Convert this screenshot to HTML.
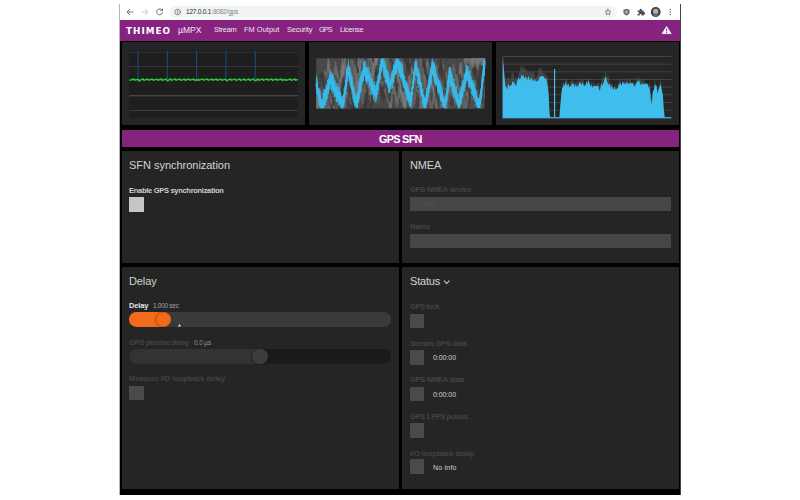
<!DOCTYPE html>
<html><head><meta charset="utf-8"><title>GPS SFN</title>
<style>
html,body{margin:0;padding:0;background:#fff;}
body{width:800px;height:500px;position:relative;overflow:hidden;font-family:"Liberation Sans",sans-serif;}
.a{position:absolute;}
.t{position:absolute;white-space:nowrap;line-height:1;transform:rotate(0.01deg);}
.p{position:absolute;background:#252525;}
.cb{position:absolute;width:14.6px;height:14.5px;background:#4a4a4a;}
svg{position:absolute;left:0;top:0;}
</style></head><body>

<div class="a" style="left:119.4px;top:4px;width:0.8px;height:491px;background:#b5b5b5"></div>
<div class="a" style="left:680px;top:4px;width:0.6px;height:491px;background:#444"></div>
<div class="a" style="left:120px;top:20.4px;width:560px;height:20.2px;background:#85237f"></div>
<div class="a" style="left:120px;top:40.5px;width:560px;height:454.1px;background:#000"></div>
<div class="a" style="left:168.6px;top:5.8px;width:448px;height:12.2px;border-radius:6.1px;background:#f1f3f4"></div>
<div class="p" style="left:122px;top:42.2px;width:183.3px;height:82.8px"></div>
<div class="p" style="left:308.8px;top:42.2px;width:183.3px;height:82.8px"></div>
<div class="p" style="left:495.5px;top:42.2px;width:183.9px;height:82.8px"></div>
<div class="a" style="left:122px;top:130px;width:557.2px;height:17px;background:#85237f"></div>
<div class="p" style="left:122px;top:150.8px;width:276.6px;height:112px"></div>
<div class="p" style="left:402.3px;top:150.8px;width:276.9px;height:112px"></div>
<div class="p" style="left:122px;top:266.6px;width:276.6px;height:222px"></div>
<div class="p" style="left:402.3px;top:266.6px;width:276.9px;height:222px"></div>
<div class="a" style="left:409.6px;top:197.4px;width:261.6px;height:14.1px;background:#464646"></div>
<div class="a" style="left:409.6px;top:233.7px;width:261.6px;height:14.1px;background:#464646"></div>
<div class="cb" style="left:129.4px;top:197px;background:#c6c6c6"></div>
<div class="cb" style="left:129.4px;top:385.6px"></div>
<div class="cb" style="left:409.7px;top:313.7px"></div>
<div class="cb" style="left:409.7px;top:350.2px"></div>
<div class="cb" style="left:409.7px;top:386.6px"></div>
<div class="cb" style="left:409.7px;top:423px"></div>
<div class="cb" style="left:409.7px;top:459.4px"></div>
<div class="a" style="left:129px;top:312.4px;width:262.4px;height:14.6px;border-radius:7.3px;background:#3a3a3a"></div>
<div class="a" style="left:129px;top:312.4px;width:40px;height:14.6px;border-radius:7.3px;background:#f26a1b"></div>
<div class="a" style="left:155.8px;top:311.9px;width:15.6px;height:15.6px;border-radius:50%;background:#f26a1b;box-shadow:0 0 0 0.7px #c95512 inset, -1px 0 2px rgba(0,0,0,.25)"></div>
<div class="a" style="left:129px;top:349px;width:262.4px;height:14.6px;border-radius:7.3px;background:#1a1a1a"></div>
<div class="a" style="left:129px;top:349px;width:138px;height:14.6px;border-radius:7.3px;background:#333"></div>
<div class="a" style="left:252.2px;top:348.5px;width:15.6px;height:15.6px;border-radius:50%;background:#3d3d3d;box-shadow:-1px 0 2px rgba(0,0,0,.3)"></div>
<svg width="800" height="500" viewBox="0 0 800 500">
<rect x="129.4" y="50.4" width="168.6" height="67.3" fill="#1e1e1e"/>
<rect x="129.4" y="51.7" width="168.6" height="1" fill="#343434"/>
<rect x="129.4" y="66.1" width="168.6" height="1" fill="#3a3a3a"/>
<rect x="129.4" y="95.3" width="168.6" height="1" fill="#585858"/>
<rect x="129.4" y="110.0" width="168.6" height="1" fill="#3c3c3c"/>
<rect x="137.5" y="50.4" width="1" height="29.1" fill="#1a4f80"/>
<rect x="166.8" y="50.4" width="1" height="29.1" fill="#1a4f80"/>
<rect x="196.1" y="50.4" width="1" height="29.1" fill="#1a4f80"/>
<rect x="225.4" y="50.4" width="1" height="29.1" fill="#1a4f80"/>
<rect x="254.7" y="50.4" width="1" height="29.1" fill="#1a4f80"/>
<polyline points="129.4,80.4 130.0,80.2 130.5,80.2 131.1,79.8 131.7,79.8 132.3,79.5 132.8,79.2 133.4,79.2 134.0,78.9 134.6,80.3 135.1,80.0 135.7,79.8 136.3,79.7 136.9,79.7 137.4,79.3 138.0,79.8 138.6,79.7 139.2,81.1 139.7,80.8 140.3,79.9 140.9,79.9 141.5,79.4 142.0,79.5 142.6,79.1 143.2,78.9 143.8,80.2 144.3,80.1 144.9,80.0 145.5,79.7 146.1,79.6 146.6,79.4 147.2,79.1 147.8,79.0 148.4,80.2 148.9,80.0 149.5,79.8 150.1,79.8 150.7,79.5 151.2,79.3 151.8,79.2 152.4,79.0 153.0,80.3 153.5,80.2 154.1,80.0 154.7,79.7 155.3,79.6 155.8,79.4 156.4,79.3 157.0,79.1 157.6,80.2 158.1,80.3 158.7,79.8 159.3,79.7 159.9,79.6 160.4,79.3 161.0,79.2 161.6,78.9 162.2,80.4 162.7,80.2 163.3,80.0 163.9,79.9 164.5,79.5 165.0,79.4 165.6,79.2 166.2,79.0 166.8,80.3 167.3,80.9 167.9,80.8 168.5,80.4 169.1,79.6 169.6,79.2 170.2,79.2 170.8,79.0 171.4,80.5 171.9,80.2 172.5,79.9 173.1,79.7 173.7,79.6 174.2,79.2 174.8,79.2 175.4,78.9 176.0,80.2 176.5,80.0 177.1,80.0 177.7,79.6 178.3,79.5 178.8,79.3 179.4,79.3 180.0,78.9 180.6,80.3 181.1,80.1 181.7,80.1 182.3,79.8 182.9,79.7 183.4,79.3 184.0,79.2 184.6,79.0 185.2,80.4 185.7,80.3 186.3,79.8 186.9,79.7 187.5,79.5 188.0,79.3 188.6,79.2 189.2,79.0 189.8,80.2 190.3,80.0 190.9,79.9 191.5,79.7 192.1,79.6 192.6,79.5 193.2,79.2 193.8,79.0 194.4,80.3 194.9,80.2 195.5,79.8 196.1,79.9 196.7,80.3 197.2,80.2 197.8,80.0 198.4,79.0 199.0,80.3 199.5,80.0 200.1,80.0 200.7,79.6 201.3,79.4 201.8,79.3 202.4,79.1 203.0,79.0 203.6,80.2 204.1,80.0 204.7,79.8 205.3,79.6 205.9,79.5 206.4,79.2 207.0,79.3 207.6,79.0 208.2,80.2 208.7,80.1 209.3,79.9 209.9,79.7 210.5,79.4 211.0,79.5 211.6,79.3 212.2,79.0 212.8,80.3 213.3,80.0 213.9,79.8 214.5,79.7 215.1,79.5 215.6,79.5 216.2,79.1 216.8,78.9 217.4,80.4 217.9,80.1 218.5,79.8 219.1,79.8 219.7,79.4 220.2,79.4 220.8,79.3 221.4,79.1 222.0,80.4 222.5,80.1 223.1,79.9 223.7,79.7 224.3,79.6 224.8,79.4 225.4,79.3 226.0,79.6 226.6,80.9 227.1,80.9 227.7,80.1 228.3,79.9 228.9,79.7 229.4,79.5 230.0,79.3 230.6,78.9 231.2,80.3 231.7,80.1 232.3,79.8 232.9,79.6 233.5,79.5 234.0,79.3 234.6,79.2 235.2,79.1 235.8,80.3 236.3,80.3 236.9,80.1 237.5,79.9 238.1,79.5 238.6,79.3 239.2,79.1 239.8,78.9 240.4,80.2 240.9,80.2 241.5,80.1 242.1,79.9 242.7,79.6 243.2,79.4 243.8,79.3 244.4,78.9 245.0,80.4 245.5,80.2 246.1,80.0 246.7,79.8 247.3,79.6 247.8,79.3 248.4,79.3 249.0,78.9 249.6,80.4 250.1,80.3 250.7,79.9 251.3,79.7 251.9,79.7 252.4,79.4 253.0,79.1 253.6,78.9 254.2,80.2 254.7,80.2 255.3,80.7 255.9,80.3 256.5,80.4 257.0,79.5 257.6,79.2 258.2,79.0 258.8,80.3 259.3,80.0 259.9,79.8 260.5,79.9 261.1,79.6 261.6,79.4 262.2,79.3 262.8,79.0 263.4,80.4 263.9,80.2 264.5,79.9 265.1,79.7 265.7,79.5 266.2,79.3 266.8,79.2 267.4,78.9 268.0,80.3 268.5,80.0 269.1,80.1 269.7,79.7 270.3,79.5 270.8,79.4 271.4,79.3 272.0,79.0 272.6,80.4 273.1,80.1 273.7,79.9 274.3,79.8 274.9,79.4 275.4,79.4 276.0,79.1 276.6,78.9 277.2,80.4 277.7,80.0 278.3,79.9 278.9,79.8 279.5,79.6 280.0,79.3 280.6,79.2 281.2,79.0 281.8,80.4 282.3,80.0 282.9,80.0 283.5,79.7 284.1,79.5 284.6,80.2 285.2,79.9 285.8,79.7 286.4,80.4 286.9,80.2 287.5,79.9 288.1,79.8 288.7,79.6 289.2,79.4 289.8,79.2 290.4,79.0 291.0,80.3 291.5,80.1 292.1,80.1 292.7,79.8 293.3,79.7 293.8,79.5 294.4,79.1 295.0,79.0 295.6,80.4 296.1,80.2 296.7,79.8 297.3,79.6 297.9,79.5" fill="none" stroke="#2bcb3e" stroke-width="1.4" stroke-linejoin="round"/>
<rect x="316.2" y="58.3" width="168.6" height="50.2" fill="#484848"/>
<path d="M316.50 103.9V108.5M317.10 96.7V108.5M317.70 98.8V108.5M318.30 96.8V108.5M318.90 89.1V103.4M319.50 87.3V102.7M320.10 88.6V104.9M320.70 84.2V97.2M321.30 84.1V96.1M321.90 83.6V93.2M322.50 77.2V88.4M323.10 75.7V88.7M323.70 76.7V85.2M324.30 71.5V81.5M324.90 70.0V88.4M325.50 71.9V85.5M326.10 78.7V86.8M326.70 76.9V90.3M327.30 80.9V96.2M327.90 79.1V92.6M328.50 84.8V98.3M329.10 82.8V97.7M329.70 87.2V94.2M330.30 86.4V95.9M330.90 85.1V102.1M331.50 88.3V100.4M332.10 90.1V102.5M332.70 92.3V107.5M333.30 96.1V108.5M333.90 99.2V108.0M334.50 98.6V108.5M335.10 102.6V108.5M335.70 104.2V108.5M336.30 103.7V108.5M336.90 104.2V108.5M337.50 99.8V108.5M338.10 95.8V103.7M338.70 90.6V101.9M339.30 84.4V95.0M339.90 74.3V87.6M340.50 70.3V85.1M341.10 67.7V83.0M341.70 63.6V75.9M342.30 58.3V71.2M342.90 60.4V77.1M343.50 65.1V78.4M344.10 70.5V79.3M344.70 75.4V82.8M345.30 77.8V86.7M345.90 82.3V94.7M346.50 80.0V96.8M347.10 87.4V97.1M347.70 90.6V101.9M348.30 92.4V103.4M348.90 91.3V108.5M349.50 96.7V108.2M350.10 96.3V108.5M350.70 98.8V107.3M351.30 94.5V107.4M351.90 93.5V104.4M352.50 91.9V99.8M353.10 88.4V97.8M353.70 85.8V92.3M354.30 81.4V93.1M354.90 76.0V91.0M355.50 71.8V87.4M356.10 67.0V81.9M356.70 67.6V82.7M357.30 61.4V77.0M357.90 62.8V75.0M358.50 58.3V70.9M359.10 58.3V73.6M359.70 62.4V73.1M360.30 59.3V76.8M360.90 61.4V77.2M361.50 62.9V80.0M362.10 66.4V78.8M362.70 73.1V80.2M363.30 74.3V86.9M363.90 72.6V86.9M364.50 73.5V88.7M365.10 75.9V85.4M365.70 75.2V92.0M366.30 78.7V93.0M366.90 83.7V95.3M367.50 84.2V92.5M368.10 85.9V98.9M368.70 88.1V100.7M369.30 88.1V100.2M369.90 90.3V104.5M370.50 86.0V101.7M371.10 83.6V94.6M371.70 83.8V92.6M372.30 79.0V91.1M372.90 76.9V83.5M373.50 71.0V83.6M374.10 64.0V79.5M374.70 62.7V74.3M375.30 58.3V67.4M375.90 58.3V63.8M376.50 58.3V66.9M377.10 58.3V65.8M377.70 58.3V71.6M378.30 59.3V68.6M378.90 58.3V71.2M379.50 62.2V73.2M380.10 65.1V81.4M380.70 70.4V83.0M381.30 67.7V84.8M381.90 74.9V88.8M382.50 75.7V85.3M383.10 81.7V91.2M383.70 79.6V90.9M384.30 77.9V88.5M384.90 71.7V83.6M385.50 69.6V86.7M386.10 71.3V84.6M386.70 64.4V81.7M387.30 64.4V75.8M387.90 58.3V75.0M388.50 60.3V71.8M389.10 58.8V67.0M389.70 58.3V70.4M390.30 58.3V64.2M390.90 58.3V63.7M391.50 58.3V61.2M392.10 58.3V66.9M392.70 58.3V67.3M393.30 58.3V69.3M393.90 58.3V68.7M394.50 60.2V74.4M395.10 62.9V78.7M395.70 69.1V77.5M396.30 72.8V83.0M396.90 73.4V83.9M397.50 72.9V90.9M398.10 78.4V90.8M398.70 80.3V92.3M399.30 83.1V91.4M399.90 84.3V98.1M400.50 83.8V94.8M401.10 82.5V101.8M401.70 87.2V97.3M402.30 91.4V100.5M402.90 93.4V101.7M403.50 94.1V105.9M404.10 91.6V108.5M404.70 95.7V107.5M405.30 91.1V102.1M405.90 88.7V97.1M406.50 77.9V91.5M407.10 76.6V90.5M407.70 69.5V83.1M408.30 68.9V79.4M408.90 62.3V78.1M409.50 58.3V72.3M410.10 58.8V65.2M410.70 58.3V74.2M411.30 61.0V71.1M411.90 65.9V81.1M412.50 66.3V84.1M413.10 68.8V83.3M413.70 78.3V86.1M414.30 77.7V95.0M414.90 80.7V96.3M415.50 83.7V98.2M416.10 88.5V98.6M416.70 90.1V103.2M417.30 94.6V107.2M417.90 101.9V108.5M418.50 102.1V108.5M419.10 107.2V108.5M419.70 101.3V108.5M420.30 99.9V108.5M420.90 97.3V105.5M421.50 90.0V105.9M422.10 84.6V101.3M422.70 81.7V92.6M423.30 74.4V92.0M423.90 75.3V83.6M424.50 70.3V84.5M425.10 67.2V78.0M425.70 61.8V79.0M426.30 62.7V71.3M426.90 58.4V72.1M427.50 62.2V75.1M428.10 60.6V75.3M428.70 66.5V80.8M429.30 64.5V77.9M429.90 71.1V83.9M430.50 72.9V87.6M431.10 73.8V84.6M431.70 78.1V88.6M432.30 75.5V89.2M432.90 82.1V92.3M433.50 80.7V94.5M434.10 89.8V96.6M434.70 90.1V105.1M435.30 90.3V108.4M435.90 91.4V106.2M436.50 99.1V108.5M437.10 97.7V108.5M437.70 100.8V108.5M438.30 105.2V108.5M438.90 108.5V108.5M439.50 102.1V108.5M440.10 97.9V108.5M440.70 91.5V101.5M441.30 82.0V96.8M441.90 82.8V92.4M442.50 75.9V90.9M443.10 72.5V82.4M443.70 64.2V76.7M444.30 67.4V84.4M444.90 74.9V81.4M445.50 76.8V89.7M446.10 77.5V90.5M446.70 75.1V89.8M447.30 76.9V93.9M447.90 84.2V97.0M448.50 86.2V96.4M449.10 90.8V102.1M449.70 86.8V103.7M450.30 96.0V103.8M450.90 96.2V108.5M451.50 96.2V108.5M452.10 104.5V108.5M452.70 106.2V108.5M453.30 100.8V108.5M453.90 96.7V108.5M454.50 94.1V106.7M455.10 92.1V102.9M455.70 84.9V96.9M456.30 81.5V94.5M456.90 83.2V89.9M457.50 76.7V88.8M458.10 70.6V89.6M458.70 67.4V82.2M459.30 70.5V80.7M459.90 63.0V77.0M460.50 63.0V73.6M461.10 62.1V77.2M461.70 63.0V80.1M462.30 69.5V82.3M462.90 70.9V83.0M463.50 73.0V86.8M464.10 76.8V85.9M464.70 79.1V87.9M465.30 79.1V91.5M465.90 82.6V98.3M466.50 84.0V95.1M467.10 84.0V100.3M467.70 84.9V98.6M468.30 87.9V105.5M468.90 88.7V101.3M469.50 94.4V103.3M470.10 96.6V108.5M470.70 95.2V108.5M471.30 94.8V108.5M471.90 100.9V108.5M472.50 97.8V108.5M473.10 102.1V108.5M473.70 103.9V108.5M474.30 97.7V106.9M474.90 88.6V103.4M475.50 85.1V92.6M476.10 77.9V90.9M476.70 72.5V82.0M477.30 62.1V77.5M477.90 61.3V68.4M478.50 58.3V65.6M479.10 58.3V59.4M479.70 58.3V63.8M480.30 58.3V61.2M480.90 58.3V61.5M481.50 58.3V62.0M482.10 58.3V65.8M482.70 58.3V62.6M483.30 58.3V61.5M483.90 58.3V66.1M484.50 58.3V65.3" stroke="#7a7a7a" stroke-opacity="0.85" stroke-width="0.9" fill="none"/>
<path d="M316.50 77.5V87.9M317.10 81.2V91.2M317.70 77.4V94.3M318.30 77.4V90.3M318.90 77.2V87.8M319.50 77.8V89.5M320.10 72.4V85.6M320.70 74.5V89.5M321.30 76.6V84.8M321.90 72.4V91.8M322.50 76.7V86.4M323.10 74.6V89.8M323.70 75.8V92.5M324.30 82.0V94.6M324.90 84.2V94.6M325.50 82.6V100.3M326.10 89.9V98.7M326.70 91.1V103.5M327.30 95.5V104.1M327.90 93.7V108.5M328.50 100.8V108.5M329.10 98.1V108.5M329.70 99.9V108.5M330.30 102.9V108.5M330.90 102.4V108.5M331.50 98.3V108.5M332.10 95.5V108.5M332.70 94.9V104.1M333.30 92.2V103.3M333.90 87.9V104.7M334.50 87.6V98.1M335.10 85.1V95.2M335.70 85.1V95.0M336.30 80.1V92.8M336.90 79.9V90.6M337.50 76.5V88.2M338.10 68.6V83.6M338.70 73.9V83.8M339.30 69.1V82.7M339.90 71.7V90.7M340.50 74.5V91.3M341.10 80.2V94.5M341.70 80.1V96.2M342.30 84.5V97.1M342.90 81.4V94.3M343.50 87.7V101.4M344.10 91.2V104.6M344.70 92.6V106.2M345.30 92.4V108.4M345.90 95.1V104.4M346.50 93.6V105.4M347.10 97.5V105.1M347.70 97.3V108.5M348.30 93.6V107.0M348.90 96.5V108.5M349.50 100.5V108.5M350.10 103.9V108.5M350.70 104.7V108.5M351.30 104.3V108.5M351.90 95.7V108.5M352.50 89.7V103.1M353.10 83.4V100.4M353.70 82.9V96.8M354.30 78.9V91.4M354.90 74.2V86.3M355.50 67.1V79.3M356.10 58.3V73.3M356.70 59.8V72.7M357.30 66.9V74.2M357.90 65.5V78.9M358.50 68.9V84.8M359.10 74.2V82.8M359.70 73.3V84.0M360.30 78.3V87.5M360.90 81.5V91.5M361.50 83.1V97.3M362.10 89.0V100.7M362.70 90.3V100.5M363.30 95.6V104.4M363.90 101.0V108.5M364.50 97.8V108.5M365.10 99.0V108.5M365.70 99.6V108.5M366.30 94.4V107.3M366.90 90.1V105.7M367.50 84.4V97.3M368.10 79.6V92.2M368.70 78.5V91.1M369.30 78.2V90.1M369.90 74.9V84.9M370.50 64.8V78.4M371.10 66.4V78.1M371.70 60.7V74.7M372.30 60.0V69.4M372.90 60.6V69.0M373.50 58.8V76.5M374.10 62.3V73.4M374.70 63.7V80.8M375.30 66.2V80.5M375.90 71.0V79.3M376.50 72.1V80.0M377.10 72.6V86.2M377.70 71.3V88.1M378.30 75.8V87.6M378.90 76.6V91.1M379.50 77.9V89.4M380.10 78.9V96.2M380.70 83.8V97.5M381.30 84.9V94.3M381.90 82.3V100.1M382.50 83.0V96.5M383.10 82.9V97.3M383.70 88.1V102.2M384.30 83.8V99.3M384.90 78.7V94.8M385.50 76.6V93.3M386.10 73.4V88.4M386.70 71.2V86.3M387.30 71.1V83.0M387.90 67.9V80.8M388.50 63.2V70.4M389.10 59.2V72.5M389.70 58.3V62.8M390.30 58.3V62.4M390.90 58.3V64.7M391.50 58.3V62.5M392.10 58.3V66.8M392.70 58.3V72.2M393.30 62.9V75.4M393.90 60.5V79.5M394.50 69.8V78.0M395.10 73.3V80.3M395.70 71.7V89.4M396.30 74.8V91.0M396.90 80.8V89.5M397.50 84.4V96.4M398.10 81.1V90.7M398.70 76.9V86.0M399.30 75.3V88.3M399.90 71.9V82.8M400.50 65.0V81.3M401.10 63.1V79.4M401.70 66.1V75.2M402.30 58.5V72.3M402.90 58.3V71.6M403.50 58.3V71.8M404.10 58.3V69.5M404.70 58.3V61.7M405.30 58.3V66.2M405.90 58.3V63.9M406.50 58.3V68.0M407.10 58.3V67.7M407.70 58.3V72.0M408.30 58.3V70.2M408.90 62.9V75.3M409.50 63.2V73.5M410.10 64.5V75.5M410.70 65.6V82.0M411.30 69.3V82.2M411.90 73.7V85.2M412.50 73.0V85.9M413.10 75.8V88.2M413.70 83.4V92.7M414.30 83.9V96.1M414.90 83.5V97.3M415.50 88.8V101.7M416.10 89.0V105.6M416.70 92.1V105.1M417.30 97.4V108.5M417.90 95.4V108.5M418.50 100.3V108.5M419.10 91.6V107.1M419.70 90.5V100.6M420.30 84.8V93.8M420.90 80.0V93.1M421.50 72.0V85.0M422.10 72.5V81.3M422.70 67.1V79.0M423.30 62.0V71.6M423.90 58.3V70.9M424.50 61.5V75.0M425.10 63.9V73.3M425.70 60.1V78.5M426.30 67.0V77.5M426.90 69.5V80.8M427.50 76.5V86.7M428.10 81.6V90.7M428.70 80.2V96.6M429.30 84.8V98.5M429.90 91.2V102.4M430.50 92.3V106.3M431.10 91.7V107.1M431.70 97.0V108.5M432.30 102.5V108.5M432.90 101.1V108.5M433.50 98.8V108.5M434.10 95.3V108.5M434.70 93.3V104.7M435.30 92.4V102.0M435.90 84.4V100.9M436.50 82.2V94.4M437.10 80.5V92.6M437.70 75.8V89.1M438.30 70.3V84.1M438.90 68.9V84.9M439.50 67.3V79.4M440.10 59.8V72.9M440.70 59.4V70.3M441.30 58.9V75.1M441.90 67.2V77.9M442.50 66.4V81.3M443.10 69.0V83.1M443.70 69.2V84.6M444.30 70.4V84.5M444.90 74.1V87.6M445.50 75.3V87.5M446.10 75.6V90.9M446.70 83.8V92.2M447.30 86.2V95.2M447.90 85.5V99.4M448.50 88.3V98.6M449.10 91.4V104.1M449.70 88.6V104.9M450.30 91.7V106.0M450.90 97.8V106.2M451.50 95.9V108.5M452.10 98.9V108.5M452.70 101.5V108.5M453.30 101.8V108.5M453.90 94.3V108.5M454.50 92.4V103.8M455.10 87.6V98.3M455.70 81.3V95.6M456.30 80.4V91.0M456.90 75.2V86.0M457.50 70.4V77.7M458.10 67.8V80.8M458.70 73.6V83.4M459.30 74.5V88.0M459.90 75.1V88.2M460.50 75.3V93.8M461.10 83.5V95.7M461.70 79.7V97.5M462.30 82.4V98.6M462.90 90.3V96.4M463.50 85.9V103.1M464.10 92.9V101.4M464.70 95.9V104.5M465.30 97.2V106.7M465.90 96.6V108.5M466.50 105.1V108.5M467.10 101.6V108.5M467.70 98.8V108.5M468.30 94.9V108.1M468.90 92.8V107.3M469.50 89.3V103.6M470.10 85.2V101.3M470.70 86.4V95.9M471.30 81.3V91.2M471.90 77.6V87.9M472.50 73.6V86.5M473.10 69.3V85.1M473.70 69.2V81.1M474.30 62.0V76.6M474.90 60.6V75.1M475.50 65.9V81.5M476.10 70.6V81.6M476.70 69.0V79.6M477.30 70.8V88.1M477.90 75.4V90.6M478.50 76.2V89.1M479.10 75.5V88.1M479.70 78.9V94.3M480.30 79.7V94.3M480.90 84.0V97.0M481.50 83.5V96.4M482.10 87.4V99.4M482.70 88.2V103.8M483.30 88.0V102.6M483.90 92.1V103.5M484.50 93.9V108.5" stroke="#363636" stroke-opacity="0.75" stroke-width="0.9" fill="none"/>
<path d="M316.50 77.0V87.5M317.10 74.9V87.1M317.70 73.7V89.6M318.30 74.3V91.5M318.90 76.2V86.4M319.50 78.6V86.8M320.10 80.1V93.9M320.70 77.9V92.7M321.30 77.4V94.0M321.90 81.9V96.6M322.50 83.8V98.9M323.10 86.4V98.7M323.70 89.0V102.8M324.30 94.9V102.9M324.90 96.9V108.5M325.50 92.2V108.5M326.10 97.6V108.5M326.70 96.2V108.5M327.30 100.8V108.5M327.90 101.6V108.5M328.50 100.3V108.5M329.10 105.4V108.5M329.70 106.4V108.5M330.30 98.7V108.5M330.90 95.1V104.3M331.50 91.1V103.9M332.10 82.7V102.2M332.70 81.5V93.7M333.30 75.1V87.1M333.90 72.5V79.7M334.50 67.6V78.4M335.10 60.8V74.4M335.70 62.0V74.7M336.30 65.3V76.4M336.90 66.9V79.8M337.50 70.5V78.2M338.10 69.7V86.1M338.70 72.3V89.4M339.30 77.1V92.5M339.90 81.4V97.2M340.50 86.0V100.6M341.10 85.9V97.0M341.70 94.0V104.7M342.30 97.2V105.9M342.90 96.7V108.5M343.50 97.7V108.5M344.10 101.0V108.5M344.70 95.1V108.2M345.30 95.2V107.8M345.90 90.3V103.4M346.50 85.1V98.4M347.10 83.4V97.7M347.70 76.2V94.3M348.30 77.4V85.9M348.90 69.3V87.0M349.50 67.0V81.1M350.10 65.2V82.3M350.70 60.3V76.3M351.30 59.7V74.9M351.90 60.5V74.0M352.50 60.3V76.8M353.10 60.1V73.8M353.70 67.1V74.9M354.30 64.5V80.3M354.90 64.2V76.7M355.50 66.3V83.8M356.10 67.8V83.9M356.70 73.7V87.6M357.30 72.7V89.9M357.90 77.2V86.2M358.50 77.8V93.3M359.10 82.4V95.0M359.70 79.3V93.5M360.30 82.8V96.8M360.90 87.5V96.7M361.50 85.0V101.8M362.10 88.5V98.3M362.70 87.4V104.5M363.30 87.5V103.9M363.90 81.1V97.0M364.50 79.7V93.2M365.10 77.4V86.1M365.70 73.2V85.4M366.30 66.6V79.3M366.90 63.2V73.9M367.50 62.9V76.2M368.10 58.3V66.2M368.70 58.3V67.3M369.30 58.3V60.4M369.90 58.3V60.4M370.50 58.3V69.5M371.10 58.3V68.3M371.70 58.3V69.0M372.30 61.0V76.6M372.90 61.9V79.0M373.50 63.8V78.3M374.10 73.6V81.3M374.70 75.9V83.7M375.30 75.7V91.7M375.90 78.1V93.9M376.50 76.6V89.4M377.10 75.7V88.6M377.70 75.8V89.4M378.30 70.1V84.6M378.90 65.4V82.8M379.50 67.3V79.2M380.10 66.9V80.8M380.70 59.0V73.5M381.30 61.9V72.1M381.90 58.3V73.5M382.50 58.3V64.9M383.10 58.3V67.0M383.70 58.3V66.4M384.30 58.3V62.4M384.90 58.3V63.3M385.50 58.3V64.9M386.10 58.3V63.7M386.70 58.3V66.9M387.30 58.3V68.5M387.90 61.9V70.6M388.50 61.1V71.9M389.10 63.1V75.5M389.70 70.1V82.8M390.30 66.1V84.7M390.90 68.7V81.9M391.50 74.0V83.8M392.10 72.9V91.3M392.70 77.3V90.9M393.30 78.3V93.4M393.90 81.9V93.3M394.50 87.1V95.0M395.10 85.9V100.8M395.70 92.2V105.3M396.30 92.6V102.5M396.90 95.6V108.5M397.50 97.3V106.8M398.10 92.3V104.0M398.70 84.4V97.5M399.30 85.8V98.4M399.90 77.4V89.6M400.50 74.6V86.0M401.10 72.1V81.3M401.70 67.3V82.7M402.30 58.8V72.0M402.90 59.7V74.0M403.50 64.6V76.1M404.10 66.2V81.1M404.70 71.4V83.2M405.30 73.4V80.4M405.90 71.0V86.5M406.50 78.0V88.3M407.10 75.3V89.2M407.70 80.2V91.1M408.30 81.5V97.9M408.90 88.6V96.5M409.50 92.4V103.3M410.10 92.6V104.0M410.70 97.6V108.5M411.30 96.9V108.5M411.90 105.0V108.5M412.50 98.4V108.5M413.10 95.7V107.1M413.70 92.2V106.2M414.30 88.7V104.2M414.90 91.4V103.8M415.50 84.8V100.3M416.10 83.0V92.1M416.70 75.7V90.1M417.30 75.1V87.9M417.90 73.4V83.0M418.50 66.0V78.7M419.10 64.0V75.8M419.70 58.3V72.6M420.30 58.3V71.1M420.90 59.6V71.3M421.50 61.2V80.0M422.10 66.3V79.3M422.70 68.5V81.9M423.30 67.6V81.9M423.90 74.9V82.9M424.50 76.3V89.8M425.10 79.8V86.7M425.70 77.0V89.2M426.30 79.7V94.0M426.90 82.5V97.1M427.50 87.7V100.5M428.10 85.6V97.0M428.70 92.0V102.3M429.30 93.4V102.3M429.90 95.4V105.2M430.50 96.9V108.5M431.10 102.8V108.5M431.70 101.5V108.5M432.30 99.1V108.5M432.90 98.0V108.5M433.50 92.4V104.9M434.10 84.7V102.8M434.70 84.2V94.2M435.30 78.2V94.1M435.90 69.9V87.9M436.50 64.0V81.7M437.10 70.0V80.0M437.70 65.7V84.9M438.30 71.7V85.1M438.90 74.5V86.8M439.50 79.1V88.6M440.10 78.5V88.2M440.70 83.5V97.3M441.30 80.8V97.8M441.90 84.9V102.7M442.50 87.6V100.0M443.10 92.5V104.8M443.70 95.4V108.1M444.30 96.4V108.5M444.90 103.4V108.5M445.50 104.4V108.5M446.10 104.0V108.5M446.70 98.0V108.5M447.30 92.7V108.5M447.90 94.4V105.6M448.50 89.5V100.3M449.10 89.3V97.1M449.70 85.1V96.0M450.30 82.1V90.5M450.90 76.5V92.2M451.50 72.6V86.9M452.10 68.8V80.8M452.70 64.9V79.1M453.30 62.5V76.0M453.90 65.1V75.0M454.50 68.0V79.1M455.10 69.0V81.8M455.70 73.9V82.4M456.30 74.5V86.1M456.90 75.0V86.5M457.50 73.8V88.8M458.10 77.6V90.1M458.70 84.8V97.4M459.30 86.7V95.9M459.90 85.5V99.7M460.50 89.2V97.5M461.10 84.6V102.5M461.70 91.7V101.1M462.30 89.6V104.7M462.90 90.2V107.9M463.50 94.3V108.5M464.10 94.5V108.5M464.70 98.2V108.5M465.30 97.2V108.5M465.90 99.9V108.5M466.50 102.9V108.5M467.10 99.2V108.5M467.70 93.0V106.0M468.30 85.2V101.5M468.90 82.6V94.5M469.50 76.1V90.4M470.10 71.3V82.1M470.70 63.6V76.1M471.30 58.3V73.1M471.90 58.3V64.7M472.50 58.3V63.1M473.10 58.3V64.5M473.70 58.3V60.5M474.30 58.3V65.9M474.90 58.3V67.4M475.50 58.3V64.4M476.10 58.3V62.2M476.70 58.3V66.8M477.30 58.3V68.4M477.90 58.3V69.4M478.50 58.3V65.6M479.10 58.3V64.2M479.70 58.3V65.1M480.30 58.3V65.3M480.90 58.3V61.1M481.50 58.3V63.1M482.10 58.3V64.1M482.70 58.3V66.6M483.30 58.3V64.3M483.90 58.3V62.5M484.50 58.3V65.9" stroke="#6e6e6e" stroke-opacity="0.8" stroke-width="0.9" fill="none"/>
<path d="M316.50 71.5V90.1M317.10 75.0V85.3M317.70 72.5V89.5M318.30 72.2V91.3M318.90 76.8V86.8M319.50 79.7V91.3M320.10 81.7V92.5M320.70 87.4V99.1M321.30 89.3V104.7M321.90 89.9V100.6M322.50 94.1V108.5M323.10 97.4V108.5M323.70 102.1V108.5M324.30 100.9V108.5M324.90 106.8V108.5M325.50 103.9V108.5M326.10 101.1V108.5M326.70 96.5V108.5M327.30 100.1V108.0M327.90 92.7V104.7M328.50 94.3V102.2M329.10 88.4V103.8M329.70 84.8V100.7M330.30 86.1V97.6M330.90 81.0V94.3M331.50 78.0V87.6M332.10 75.7V84.3M332.70 68.4V84.8M333.30 69.8V81.6M333.90 74.5V87.1M334.50 72.7V89.5M335.10 75.7V89.1M335.70 78.9V87.0M336.30 76.8V91.0M336.90 78.8V96.8M337.50 85.3V97.6M338.10 83.0V99.2M338.70 85.3V99.7M339.30 88.5V101.1M339.90 92.3V106.6M340.50 92.0V106.9M341.10 94.6V103.5M341.70 94.7V104.5M342.30 96.7V108.5M342.90 100.2V108.5M343.50 100.5V108.5M344.10 105.0V108.5M344.70 102.0V108.5M345.30 107.9V108.5M345.90 107.1V108.5M346.50 98.1V108.5M347.10 95.7V107.7M347.70 90.1V98.6M348.30 84.6V94.6M348.90 75.3V92.7M349.50 75.6V85.2M350.10 67.2V80.9M350.70 61.1V75.3M351.30 61.0V72.1M351.90 64.7V74.8M352.50 66.2V79.0M353.10 68.2V84.6M353.70 75.3V85.6M354.30 79.4V93.0M354.90 82.9V93.3M355.50 82.7V94.4M356.10 83.9V98.0M356.70 87.5V102.1M357.30 92.2V101.5M357.90 96.5V108.5M358.50 98.3V108.5M359.10 102.7V108.5M359.70 99.5V108.5M360.30 98.2V106.8M360.90 93.8V102.3M361.50 87.2V100.2M362.10 86.1V101.3M362.70 80.3V97.9M363.30 82.0V90.8M363.90 80.2V91.1M364.50 73.2V86.3M365.10 72.4V85.9M365.70 67.9V80.5M366.30 67.5V80.3M366.90 65.4V73.5M367.50 58.3V75.4M368.10 60.9V72.2M368.70 67.2V74.6M369.30 66.6V77.4M369.90 69.3V77.7M370.50 65.9V77.6M371.10 65.3V81.2M371.70 67.0V79.8M372.30 68.6V81.9M372.90 75.3V87.1M373.50 71.8V85.2M374.10 78.8V91.1M374.70 76.8V87.3M375.30 81.9V94.2M375.90 82.6V96.4M376.50 80.2V92.0M377.10 81.9V95.6M377.70 83.0V100.0M378.30 89.1V102.3M378.90 88.4V103.9M379.50 83.6V99.7M380.10 78.9V95.1M380.70 77.7V87.3M381.30 74.4V86.9M381.90 67.5V80.9M382.50 65.4V77.0M383.10 62.5V79.0M383.70 62.2V73.9M384.30 58.3V70.4M384.90 58.3V63.5M385.50 58.3V64.6M386.10 58.3V66.8M386.70 60.5V72.5M387.30 62.4V71.7M387.90 62.6V75.3M388.50 61.9V76.9M389.10 68.5V82.8M389.70 71.8V82.7M390.30 69.3V84.8M390.90 71.8V84.3M391.50 74.6V89.5M392.10 78.2V92.8M392.70 76.1V88.7M393.30 76.9V86.9M393.90 76.7V85.1M394.50 73.4V85.7M395.10 69.3V79.2M395.70 67.8V79.4M396.30 66.7V74.4M396.90 65.6V78.6M397.50 58.3V70.1M398.10 58.3V74.1M398.70 58.3V65.9M399.30 58.3V64.3M399.90 58.3V60.9M400.50 58.3V63.9M401.10 58.3V68.3M401.70 58.3V65.8M402.30 59.2V66.3M402.90 58.3V73.9M403.50 61.8V71.2M404.10 61.3V77.7M404.70 61.2V74.8M405.30 64.2V81.2M405.90 70.5V80.1M406.50 69.8V83.8M407.10 75.8V88.3M407.70 78.6V93.1M408.30 83.1V93.4M408.90 80.5V96.6M409.50 81.5V98.8M410.10 81.3V97.4M410.70 85.9V96.5M411.30 87.2V97.9M411.90 88.7V100.7M412.50 92.7V108.5M413.10 97.4V104.3M413.70 96.0V106.4M414.30 94.4V106.3M414.90 84.0V101.5M415.50 82.6V93.5M416.10 76.5V90.7M416.70 73.7V85.1M417.30 67.2V83.6M417.90 60.2V73.7M418.50 59.2V70.4M419.10 58.3V68.5M419.70 61.6V69.6M420.30 62.7V78.8M420.90 62.7V81.1M421.50 65.3V84.9M422.10 70.9V86.9M422.70 77.9V89.1M423.30 79.6V91.7M423.90 78.6V94.6M424.50 84.3V96.9M425.10 90.0V104.6M425.70 95.8V103.3M426.30 96.3V106.0M426.90 98.1V108.5M427.50 102.0V108.5M428.10 103.5V108.5M428.70 101.0V108.5M429.30 93.8V108.5M429.90 95.2V108.0M430.50 90.1V98.5M431.10 84.1V95.6M431.70 80.3V93.6M432.30 76.0V86.8M432.90 73.0V86.7M433.50 72.6V82.0M434.10 69.2V78.8M434.70 60.2V76.1M435.30 58.3V69.9M435.90 58.3V73.2M436.50 64.2V76.8M437.10 65.0V75.0M437.70 63.9V80.5M438.30 72.2V84.6M438.90 75.1V83.2M439.50 75.2V83.9M440.10 76.0V87.6M440.70 80.3V93.4M441.30 78.3V94.9M441.90 80.2V96.3M442.50 81.7V100.2M443.10 88.8V101.2M443.70 89.4V103.1M444.30 88.2V100.8M444.90 93.9V107.7M445.50 92.4V108.5M446.10 101.3V108.5M446.70 103.5V108.5M447.30 105.9V108.5M447.90 104.3V108.5M448.50 103.9V108.5M449.10 94.3V108.5M449.70 94.4V101.3M450.30 84.0V96.9M450.90 79.8V91.7M451.50 72.8V86.3M452.10 70.6V83.7M452.70 63.1V77.7M453.30 62.8V75.6M453.90 70.5V79.9M454.50 72.8V88.4M455.10 74.1V85.9M455.70 81.8V94.8M456.30 83.3V95.3M456.90 87.3V100.3M457.50 88.1V103.0M458.10 89.0V99.8M458.70 93.4V103.2M459.30 94.2V104.6M459.90 99.9V108.5M460.50 100.7V108.5M461.10 104.1V108.5M461.70 108.5V108.5M462.30 106.1V108.5M462.90 95.6V108.5M463.50 97.7V108.5M464.10 93.0V102.8M464.70 87.6V99.0M465.30 84.1V100.5M465.90 78.0V91.2M466.50 78.2V93.5M467.10 73.2V90.7M467.70 72.0V86.9M468.30 71.4V84.9M468.90 63.9V82.6M469.50 61.8V74.7M470.10 62.9V79.5M470.70 66.4V80.4M471.30 67.9V80.5M471.90 73.2V82.0M472.50 73.2V88.4M473.10 74.0V85.9M473.70 77.6V86.9M474.30 80.2V87.2M474.90 77.0V92.2M475.50 81.9V95.0M476.10 84.8V94.1M476.70 88.3V96.9M477.30 85.6V100.5M477.90 86.0V100.9M478.50 87.9V104.5M479.10 95.7V103.5M479.70 94.0V108.5M480.30 94.6V108.5M480.90 95.9V108.4M481.50 100.5V108.5M482.10 104.0V108.5M482.70 105.0V108.5M483.30 94.2V106.7M483.90 90.2V100.4M484.50 82.6V98.9" stroke="#5c5c5c" stroke-opacity="0.6" stroke-width="0.9" fill="none"/>
<path d="M316.50 86.2V104.1M317.10 88.2V98.9M317.70 87.7V105.5M318.30 93.8V102.1M318.90 92.7V108.5M319.50 93.7V108.5M320.10 98.4V108.2M320.70 96.4V108.5M321.30 98.6V108.5M321.90 104.5V108.5M322.50 106.2V108.5M323.10 102.5V108.5M323.70 95.6V107.6M324.30 94.6V107.2M324.90 85.7V102.6M325.50 84.2V94.9M326.10 74.5V87.8M326.70 73.8V81.6M327.30 63.8V75.8M327.90 58.3V72.6M328.50 58.5V72.4M329.10 61.2V75.7M329.70 63.7V76.3M330.30 69.5V82.3M330.90 69.9V86.7M331.50 77.0V90.6M332.10 76.2V92.2M332.70 85.0V96.7M333.30 89.7V96.7M333.90 90.8V104.7M334.50 92.1V106.1M335.10 94.1V108.5M335.70 99.1V108.5M336.30 106.3V108.5M336.90 99.4V108.5M337.50 97.3V108.5M338.10 91.8V101.4M338.70 88.8V101.2M339.30 85.7V93.0M339.90 79.2V92.4M340.50 75.7V92.0M341.10 76.0V88.8M341.70 72.7V87.5M342.30 68.9V82.0M342.90 66.2V77.8M343.50 62.9V76.2M344.10 58.3V69.9M344.70 58.3V70.9M345.30 58.3V74.0M345.90 64.4V73.7M346.50 66.4V77.3M347.10 69.0V78.0M347.70 67.6V83.4M348.30 67.6V82.0M348.90 71.4V82.5M349.50 70.2V88.4M350.10 75.3V88.4M350.70 72.2V86.0M351.30 75.9V91.5M351.90 79.8V91.7M352.50 78.4V91.7M353.10 80.2V96.4M353.70 84.4V98.1M354.30 82.1V99.6M354.90 87.9V101.2M355.50 83.9V98.9M356.10 91.4V98.4M356.70 81.0V93.8M357.30 83.2V95.4M357.90 80.4V88.3M358.50 73.2V84.6M359.10 72.4V87.2M359.70 66.6V83.8M360.30 67.9V75.8M360.90 58.9V75.3M361.50 60.4V70.2M362.10 58.3V65.9M362.70 58.3V63.6M363.30 58.3V72.2M363.90 61.8V72.0M364.50 64.2V74.2M365.10 66.5V78.5M365.70 69.3V81.5M366.30 71.8V81.0M366.90 71.0V86.9M367.50 74.0V84.0M368.10 71.7V90.6M368.70 75.3V88.3M369.30 80.6V88.9M369.90 81.1V91.0M370.50 75.9V88.6M371.10 73.5V82.1M371.70 68.6V84.0M372.30 67.3V82.0M372.90 62.4V81.4M373.50 62.4V76.3M374.10 63.4V74.6M374.70 58.3V72.5M375.30 58.8V68.6M375.90 58.3V65.2M376.50 58.3V69.2M377.10 58.3V64.5M377.70 58.3V61.7M378.30 58.3V67.8M378.90 58.3V70.2M379.50 59.5V70.7M380.10 59.5V72.3M380.70 59.9V71.9M381.30 66.2V77.5M381.90 63.3V78.9M382.50 68.3V85.4M383.10 73.9V85.9M383.70 73.4V87.3M384.30 78.3V90.8M384.90 78.6V93.7M385.50 82.5V95.2M386.10 82.8V94.2M386.70 84.2V96.3M387.30 87.3V101.7M387.90 89.4V102.4M388.50 93.9V102.4M389.10 91.3V107.5M389.70 96.6V108.5M390.30 100.8V108.5M390.90 95.2V108.5M391.50 91.4V107.7M392.10 84.6V102.9M392.70 85.5V94.4M393.30 75.1V87.6M393.90 74.8V83.6M394.50 70.2V79.4M395.10 60.4V75.7M395.70 58.3V67.7M396.30 58.3V73.6M396.90 62.3V74.8M397.50 62.6V79.5M398.10 69.8V81.6M398.70 71.0V83.2M399.30 73.9V84.8M399.90 76.8V85.6M400.50 81.1V92.5M401.10 85.2V92.8M401.70 83.6V96.6M402.30 90.1V103.7M402.90 94.5V105.6M403.50 92.5V105.9M404.10 98.9V108.5M404.70 100.9V108.5M405.30 100.7V108.5M405.90 95.0V108.1M406.50 93.3V106.7M407.10 86.7V100.9M407.70 85.9V98.6M408.30 84.1V98.3M408.90 78.0V91.6M409.50 75.9V88.9M410.10 77.7V89.5M410.70 73.1V85.4M411.30 66.2V83.9M411.90 68.4V78.7M412.50 61.3V73.8M413.10 58.5V73.3M413.70 62.8V78.3M414.30 64.6V77.6M414.90 64.5V80.9M415.50 67.2V81.2M416.10 74.3V85.3M416.70 72.9V88.1M417.30 78.3V86.7M417.90 81.3V93.5M418.50 83.7V91.1M419.10 81.8V97.0M419.70 89.3V100.5M420.30 88.7V98.5M420.90 89.5V103.2M421.50 92.4V108.5M422.10 92.9V108.5M422.70 99.8V108.5M423.30 102.9V108.5M423.90 103.0V108.5M424.50 104.7V108.5M425.10 101.7V108.5M425.70 98.7V108.5M426.30 94.6V108.5M426.90 85.3V103.0M427.50 83.4V92.6M428.10 79.1V89.2M428.70 71.1V83.0M429.30 64.5V77.1M429.90 62.2V75.2M430.50 64.4V80.8M431.10 73.6V82.2M431.70 73.3V85.9M432.30 77.7V87.8M432.90 77.0V90.6M433.50 80.3V96.9M434.10 83.8V97.1M434.70 84.0V99.7M435.30 93.0V102.4M435.90 91.9V102.7M436.50 93.2V105.8M437.10 98.1V108.5M437.70 98.7V108.5M438.30 104.4V108.5M438.90 103.7V108.5M439.50 103.8V108.5M440.10 101.0V108.5M440.70 97.4V105.5M441.30 89.8V107.9M441.90 88.4V101.9M442.50 85.5V99.6M443.10 78.5V90.4M443.70 79.0V90.2M444.30 69.9V83.9M444.90 71.0V82.7M445.50 67.2V79.4M446.10 65.2V78.6M446.70 62.5V76.6M447.30 61.1V79.5M447.90 66.0V74.9M448.50 68.1V81.2M449.10 71.2V82.6M449.70 74.2V84.1M450.30 74.1V87.9M450.90 78.9V91.5M451.50 81.5V94.8M452.10 78.0V97.5M452.70 83.8V95.6M453.30 84.3V99.0M453.90 84.5V97.7M454.50 89.1V104.5M455.10 89.7V103.7M455.70 94.7V102.3M456.30 90.7V108.5M456.90 97.2V108.5M457.50 100.4V108.5M458.10 95.6V108.5M458.70 97.6V108.5M459.30 103.6V108.5M459.90 100.6V108.5M460.50 94.7V107.5M461.10 87.6V96.2M461.70 79.5V90.0M462.30 72.0V87.7M462.90 68.8V78.3M463.50 63.0V73.3M464.10 58.3V68.1M464.70 58.3V64.2M465.30 58.3V62.1M465.90 58.3V67.3M466.50 58.3V66.4M467.10 58.3V63.6M467.70 58.3V60.7M468.30 58.3V63.7M468.90 58.3V61.7M469.50 58.3V62.6M470.10 58.3V65.6M470.70 58.3V64.1M471.30 58.3V63.6M471.90 58.3V68.2M472.50 58.3V67.8M473.10 58.3V67.6M473.70 58.3V65.9M474.30 58.3V61.8M474.90 58.3V61.5M475.50 58.3V60.8M476.10 58.3V64.4M476.70 58.3V67.3M477.30 58.3V62.5M477.90 58.3V65.7M478.50 58.3V60.1M479.10 58.3V63.3M479.70 58.3V58.8M480.30 58.3V64.2M480.90 58.3V64.8M481.50 58.3V66.3M482.10 58.3V67.0M482.70 58.3V63.9M483.30 58.3V66.2M483.90 58.3V61.5M484.50 58.3V60.8" stroke="#7e7e7e" stroke-opacity="0.65" stroke-width="0.9" fill="none"/>
<path d="M316.50 75.8V91.0M317.10 71.2V89.7M317.70 74.8V87.7M318.30 72.2V89.8M318.90 74.8V86.6M319.50 75.5V91.8M320.10 75.1V87.2M320.70 76.2V89.7M321.30 74.4V91.9M321.90 75.2V87.4M322.50 73.9V92.3M323.10 72.7V90.2M323.70 72.4V89.9M324.30 75.1V89.9M324.90 73.2V90.7M325.50 77.1V91.9M326.10 75.9V92.3M326.70 79.4V93.0M327.30 78.8V92.4M327.90 79.2V88.2M328.50 77.8V88.7M329.10 77.8V93.6M329.70 76.7V92.5M330.30 76.4V93.4M330.90 79.5V96.9M331.50 80.9V95.5M332.10 88.4V99.6M332.70 85.6V99.8M333.30 88.3V105.7M333.90 97.3V106.7M334.50 100.3V107.2M335.10 97.8V108.5M335.70 102.4V108.5M336.30 106.2V108.5M336.90 99.0V108.5M337.50 100.1V108.5M338.10 97.5V108.5M338.70 93.6V107.3M339.30 93.5V105.1M339.90 92.2V104.2M340.50 89.3V98.5M341.10 82.0V97.3M341.70 85.3V99.1M342.30 78.3V93.3M342.90 78.4V94.6M343.50 75.7V92.1M344.10 75.2V88.3M344.70 76.1V86.9M345.30 77.1V90.9M345.90 76.0V90.9M346.50 78.3V88.5M347.10 80.2V90.8M347.70 75.8V91.4M348.30 76.8V95.5M348.90 80.6V91.8M349.50 83.0V96.5M350.10 82.7V97.9M350.70 86.7V101.8M351.30 89.5V103.9M351.90 88.4V104.2M352.50 93.7V108.5M353.10 97.4V108.5M353.70 94.6V108.5M354.30 95.7V108.5M354.90 97.5V108.5M355.50 104.0V108.5M356.10 104.9V108.5M356.70 101.2V108.5M357.30 99.6V108.5M357.90 95.9V108.5M358.50 89.2V101.6M359.10 83.4V96.7M359.70 79.9V92.7M360.30 74.4V90.5M360.90 69.5V82.9M361.50 62.8V80.6M362.10 60.1V72.9M362.70 66.1V77.2M363.30 65.0V79.0M363.90 72.6V83.2M364.50 70.4V83.7M365.10 74.4V86.8M365.70 80.4V89.0M366.30 82.7V98.2M366.90 81.2V95.3M367.50 88.4V103.1M368.10 91.7V101.3M368.70 92.6V102.4M369.30 95.8V107.2M369.90 94.9V108.5M370.50 101.3V108.5M371.10 96.3V108.5M371.70 91.8V107.7M372.30 92.0V104.3M372.90 86.6V99.8M373.50 82.1V98.0M374.10 81.7V92.2M374.70 74.1V90.2M375.30 72.9V85.1M375.90 68.7V80.4M376.50 65.1V80.8M377.10 65.1V80.2M377.70 62.5V72.1M378.30 58.3V72.3M378.90 58.3V70.5M379.50 58.3V69.7M380.10 62.1V74.8M380.70 58.9V76.1M381.30 62.1V76.3M381.90 63.3V81.1M382.50 69.8V81.0M383.10 68.9V83.0M383.70 75.6V89.0M384.30 75.2V89.5M384.90 73.9V87.2M385.50 79.3V88.1M386.10 80.2V92.6M386.70 78.5V95.2M387.30 83.2V96.1M387.90 85.8V99.6M388.50 83.9V101.3M389.10 90.0V101.8M389.70 87.5V102.2M390.30 85.6V103.0M390.90 82.7V98.9M391.50 78.8V91.9M392.10 76.6V92.4M392.70 73.8V86.0M393.30 69.7V85.7M393.90 67.2V76.6M394.50 62.7V70.9M395.10 58.3V72.3M395.70 58.3V63.1M396.30 58.3V62.6M396.90 58.3V60.0M397.50 58.3V64.3M398.10 58.7V67.0M398.70 60.8V73.8M399.30 66.6V78.7M399.90 68.8V77.2M400.50 67.9V80.7M401.10 72.6V84.9M401.70 76.1V89.2M402.30 74.0V91.5M402.90 78.0V87.9M403.50 78.1V89.7M404.10 77.0V89.5M404.70 77.1V88.0M405.30 71.1V84.0M405.90 70.0V83.7M406.50 70.3V84.0M407.10 63.3V81.9M407.70 61.9V76.9M408.30 66.3V76.1M408.90 63.9V74.0M409.50 58.3V73.8M410.10 58.3V69.3M410.70 58.3V67.7M411.30 58.3V67.5M411.90 58.3V66.0M412.50 58.3V69.2M413.10 58.3V67.5M413.70 58.3V71.8M414.30 58.3V75.7M414.90 59.6V77.1M415.50 64.0V75.5M416.10 70.6V78.1M416.70 69.0V86.1M417.30 75.6V85.9M417.90 78.0V89.6M418.50 74.0V89.1M419.10 82.4V89.9M419.70 82.0V96.7M420.30 83.3V93.2M420.90 88.1V96.0M421.50 85.8V100.6M422.10 86.7V106.0M422.70 90.4V105.3M423.30 97.4V105.0M423.90 96.5V108.5M424.50 101.2V108.5M425.10 98.8V108.5M425.70 89.0V106.6M426.30 86.1V100.3M426.90 81.7V96.1M427.50 73.8V86.6M428.10 74.8V82.4M428.70 66.1V78.8M429.30 58.9V76.2M429.90 58.3V66.3M430.50 58.3V71.8M431.10 63.6V72.4M431.70 61.8V78.4M432.30 64.6V76.6M432.90 71.2V85.3M433.50 74.1V83.5M434.10 76.4V87.4M434.70 83.0V93.5M435.30 83.5V98.9M435.90 88.2V97.8M436.50 89.6V101.0M437.10 94.7V106.8M437.70 96.7V108.5M438.30 99.9V108.5M438.90 104.0V108.5M439.50 97.0V108.5M440.10 99.0V107.2M440.70 88.7V103.2M441.30 86.5V103.8M441.90 84.3V99.9M442.50 85.1V92.1M443.10 75.3V93.7M443.70 78.5V85.1M444.30 68.8V82.9M444.90 67.0V84.2M445.50 63.5V80.4M446.10 62.5V71.4M446.70 60.5V72.0M447.30 58.3V73.7M447.90 63.5V76.5M448.50 65.8V76.5M449.10 68.2V80.5M449.70 64.8V83.5M450.30 67.2V83.0M450.90 69.5V84.8M451.50 73.1V87.6M452.10 73.9V86.1M452.70 81.3V91.5M453.30 81.2V90.0M453.90 81.4V92.7M454.50 83.4V100.8M455.10 88.5V98.6M455.70 89.8V101.8M456.30 96.1V108.5M456.90 95.4V107.7M457.50 101.0V108.5M458.10 98.1V108.5M458.70 105.8V108.5M459.30 99.7V108.5M459.90 95.4V108.5M460.50 89.0V100.4M461.10 88.5V95.8M461.70 78.8V93.9M462.30 75.4V87.4M462.90 69.4V84.2M463.50 62.3V79.8M464.10 64.7V82.6M464.70 67.2V84.1M465.30 70.7V87.4M465.90 74.5V89.6M466.50 78.2V92.1M467.10 78.4V92.4M467.70 81.7V91.5M468.30 83.6V92.6M468.90 85.8V101.7M469.50 87.2V104.3M470.10 89.4V106.6M470.70 90.7V108.5M471.30 98.7V108.5M471.90 102.8V108.5M472.50 99.2V108.5M473.10 101.8V108.5M473.70 95.4V108.5M474.30 94.3V104.8M474.90 89.7V103.7M475.50 88.6V101.6M476.10 86.8V103.3M476.70 86.9V97.8M477.30 81.4V97.7M477.90 79.0V94.2M478.50 73.7V91.3M479.10 74.6V82.7M479.70 70.0V84.3M480.30 66.6V79.4M480.90 60.9V75.1M481.50 65.9V79.8M482.10 65.3V81.3M482.70 66.0V79.0M483.30 72.7V83.8M483.90 73.7V83.0M484.50 70.6V87.8" stroke="#3a3a3a" stroke-opacity="0.6" stroke-width="0.9" fill="none"/>
<path d="M316.40 75.5V90.3M316.80 80.3V94.4M317.20 78.0V94.3M317.60 82.0V94.2M318.00 87.4V97.0M318.40 88.5V101.5M318.80 88.9V99.1M319.20 91.7V106.0M319.60 88.4V106.7M320.00 90.8V102.4M320.40 94.4V107.1M320.80 97.4V108.2M321.20 98.6V108.2M321.60 100.3V108.2M322.00 99.5V108.2M322.40 99.5V108.2M322.80 99.1V107.7M323.20 92.9V107.6M323.60 92.0V106.0M324.00 89.2V108.2M324.40 89.5V105.9M324.80 88.6V101.6M325.20 89.2V105.4M325.60 90.0V104.9M326.00 84.1V100.1M326.40 86.6V99.3M326.80 85.3V101.9M327.20 86.4V94.3M327.60 80.0V99.0M328.00 80.0V93.9M328.40 78.1V94.2M328.80 78.8V91.7M329.20 74.9V90.2M329.60 76.0V85.5M330.00 73.3V89.2M330.40 71.3V84.6M330.80 75.6V83.8M331.20 71.5V89.6M331.60 75.4V89.9M332.00 74.2V92.2M332.40 73.1V89.7M332.80 73.8V94.4M333.20 75.4V92.1M333.60 80.0V91.4M334.00 77.5V91.8M334.40 84.2V97.3M334.80 80.3V96.1M335.20 80.9V94.1M335.60 85.9V96.8M336.00 85.8V96.9M336.40 86.9V102.6M336.80 83.0V102.1M337.20 87.1V99.2M337.60 84.3V101.7M338.00 86.5V98.8M338.40 90.7V105.1M338.80 87.2V106.0M339.20 90.7V104.7M339.60 88.9V104.0M340.00 92.2V104.9M340.40 91.7V104.2M340.80 93.5V108.2M341.20 99.2V108.2M341.60 96.0V108.2M342.00 97.6V108.2M342.40 95.7V108.2M342.80 102.3V108.2M343.20 99.6V107.4M343.60 94.2V105.3M344.00 88.3V105.9M344.40 90.5V102.1M344.80 86.1V98.9M345.20 84.3V93.7M345.60 79.9V94.5M346.00 75.7V86.9M346.40 71.6V89.7M346.80 68.2V86.2M347.20 70.7V81.0M347.60 67.3V80.1M348.00 63.6V76.8M348.40 59.4V73.5M348.80 65.8V75.8M349.20 65.7V81.2M349.60 67.6V80.2M350.00 67.6V85.1M350.40 72.6V84.5M350.80 71.5V87.2M351.20 74.9V88.9M351.60 75.5V90.1M352.00 80.9V94.1M352.40 76.7V93.0M352.80 83.4V99.6M353.20 87.1V95.4M353.60 89.5V102.7M354.00 86.8V102.3M354.40 93.6V105.3M354.80 92.2V106.0M355.20 94.2V106.7M355.60 96.9V105.9M356.00 97.1V108.2M356.40 95.9V108.2M356.80 93.8V108.2M357.20 94.2V107.3M357.60 90.5V108.2M358.00 92.3V103.3M358.40 87.5V103.0M358.80 82.7V101.4M359.20 82.6V99.3M359.60 80.3V98.0M360.00 78.1V94.8M360.40 74.8V90.9M360.80 75.2V92.2M361.20 70.9V91.6M361.60 75.9V85.1M362.00 72.0V83.9M362.40 71.3V83.2M362.80 70.0V79.7M363.20 63.8V79.2M363.60 66.8V81.3M364.00 61.3V74.6M364.40 62.4V76.3M364.80 61.3V74.9M365.20 60.7V76.6M365.60 66.8V81.5M366.00 68.8V81.6M366.40 66.2V79.3M366.80 68.2V84.4M367.20 68.1V81.4M367.60 67.5V80.8M368.00 71.1V82.1M368.40 71.0V81.2M368.80 66.6V80.6M369.20 67.7V86.2M369.60 75.3V86.0M370.00 76.4V87.9M370.40 73.0V86.6M370.80 79.1V89.9M371.20 79.7V89.5M371.60 78.4V94.8M372.00 80.2V90.7M372.40 77.9V94.4M372.80 84.2V92.9M373.20 82.6V96.3M373.60 84.7V98.9M374.00 81.3V100.7M374.40 81.9V95.2M374.80 84.9V96.5M375.20 84.7V102.2M375.60 89.5V98.3M376.00 86.1V103.1M376.40 85.4V100.0M376.80 82.1V97.0M377.20 83.7V95.1M377.60 81.4V94.9M378.00 75.2V89.0M378.40 75.3V90.6M378.80 75.0V85.2M379.20 73.3V81.0M379.60 67.7V82.9M380.00 64.0V76.7M380.40 65.3V79.6M380.80 59.7V73.3M381.20 58.6V72.0M381.60 58.9V72.3M382.00 58.6V65.0M382.40 58.6V67.5M382.80 58.6V66.8M383.20 58.6V70.7M383.60 60.9V75.0M384.00 58.6V77.1M384.40 63.7V77.6M384.80 60.3V77.3M385.20 61.7V81.8M385.60 66.7V83.0M386.00 64.3V83.4M386.40 72.2V81.7M386.80 69.4V84.9M387.20 70.6V83.2M387.60 70.0V87.3M388.00 71.8V86.5M388.40 72.5V90.3M388.80 75.5V93.1M389.20 76.2V91.9M389.60 82.6V93.0M390.00 80.7V92.7M390.40 78.2V88.6M390.80 79.3V89.4M391.20 74.2V85.4M391.60 72.3V85.5M392.00 75.0V89.3M392.40 70.9V87.8M392.80 69.7V81.2M393.20 68.9V83.4M393.60 64.9V82.6M394.00 64.2V77.5M394.40 64.2V76.8M394.80 62.2V74.5M395.20 60.3V74.2M395.60 62.2V75.2M396.00 58.6V73.5M396.40 58.6V73.8M396.80 58.6V68.6M397.20 58.6V69.5M397.60 58.6V69.2M398.00 58.6V68.0M398.40 59.5V73.2M398.80 58.6V72.9M399.20 61.1V76.5M399.60 61.0V74.7M400.00 62.6V76.8M400.40 62.0V78.0M400.80 61.0V79.3M401.20 65.3V76.6M401.60 63.2V81.3M402.00 63.1V77.9M402.40 64.9V78.7M402.80 70.7V84.2M403.20 73.4V87.3M403.60 74.2V87.8M404.00 75.6V86.2M404.40 77.9V89.8M404.80 75.9V89.5M405.20 80.0V93.9M405.60 80.8V91.8M406.00 83.6V91.9M406.40 80.8V95.6M406.80 85.9V99.9M407.20 83.3V95.0M407.60 83.9V100.2M408.00 87.0V100.6M408.40 88.9V102.9M408.80 88.4V102.4M409.20 91.8V106.5M409.60 91.1V105.7M410.00 93.3V105.4M410.40 92.7V105.4M410.80 93.1V107.8M411.20 90.6V105.8M411.60 91.0V102.0M412.00 87.3V101.0M412.40 83.0V94.6M412.80 80.7V89.5M413.20 77.7V87.1M413.60 71.5V88.8M414.00 71.2V80.5M414.40 69.4V80.0M414.80 62.3V76.0M415.20 60.1V75.8M415.60 61.8V71.1M416.00 58.6V69.8M416.40 62.7V75.1M416.80 60.3V76.7M417.20 67.9V77.1M417.60 67.6V83.2M418.00 69.2V84.2M418.40 73.3V84.1M418.80 69.2V87.8M419.20 73.2V85.6M419.60 72.7V86.7M420.00 74.3V93.5M420.40 79.1V91.0M420.80 82.3V96.3M421.20 81.9V96.2M421.60 82.7V95.7M422.00 88.2V97.8M422.40 89.7V104.5M422.80 88.6V101.9M423.20 94.7V107.2M423.60 94.0V105.7M424.00 96.1V108.2M424.40 97.3V108.2M424.80 97.4V108.2M425.20 96.7V108.2M425.60 97.1V108.2M426.00 94.2V105.6M426.40 87.9V104.3M426.80 90.9V99.5M427.20 88.8V103.4M427.60 86.0V100.0M428.00 84.7V97.9M428.40 81.2V96.5M428.80 78.6V92.0M429.20 76.2V93.2M429.60 73.7V88.9M430.00 74.3V89.9M430.40 68.8V82.8M430.80 68.1V85.3M431.20 66.2V84.7M431.60 62.9V77.8M432.00 60.2V76.5M432.40 58.6V73.5M432.80 61.5V75.6M433.20 63.6V74.4M433.60 61.3V78.1M434.00 62.9V80.7M434.40 63.3V82.7M434.80 65.0V84.6M435.20 67.1V82.6M435.60 66.6V84.9M436.00 71.6V86.3M436.40 73.9V83.9M436.80 74.6V85.2M437.20 78.6V86.2M437.60 76.7V92.2M438.00 80.9V92.7M438.40 78.7V91.3M438.80 80.2V95.3M439.20 81.4V94.1M439.60 80.3V93.2M440.00 84.0V98.3M440.40 81.6V101.3M440.80 86.7V99.8M441.20 84.8V102.6M441.60 90.1V100.4M442.00 85.8V101.8M442.40 89.3V106.5M442.80 93.1V107.6M443.20 96.4V105.8M443.60 96.6V107.2M444.00 97.6V106.3M444.40 99.4V108.2M444.80 98.3V108.2M445.20 95.7V108.2M445.60 97.8V108.2M446.00 95.7V108.2M446.40 91.6V102.5M446.80 89.6V100.9M447.20 82.4V100.6M447.60 80.4V94.2M448.00 80.4V91.7M448.40 76.7V92.8M448.80 69.9V84.4M449.20 67.2V87.4M449.60 67.8V82.9M450.00 67.0V80.8M450.40 67.0V87.0M450.80 68.8V82.8M451.20 71.5V86.9M451.60 71.5V86.0M452.00 75.3V87.0M452.40 74.9V92.6M452.80 81.6V91.0M453.20 78.6V94.5M453.60 83.8V97.9M454.00 78.7V95.5M454.40 82.6V96.2M454.80 83.6V97.6M455.20 85.9V101.2M455.60 88.8V99.2M456.00 86.0V99.9M456.40 86.3V100.8M456.80 91.2V103.3M457.20 93.7V105.0M457.60 93.1V104.7M458.00 94.5V105.6M458.40 99.1V108.1M458.80 98.6V108.2M459.20 92.7V108.2M459.60 93.6V108.2M460.00 90.5V104.5M460.40 89.4V105.9M460.80 88.4V104.4M461.20 86.1V104.0M461.60 87.0V100.6M462.00 80.4V98.0M462.40 85.2V97.9M462.80 82.6V96.7M463.20 80.1V93.8M463.60 79.9V90.4M464.00 74.2V91.7M464.40 74.4V86.6M464.80 75.4V91.2M465.20 71.9V87.5M465.60 70.0V84.4M466.00 64.7V83.9M466.40 67.7V79.4M466.80 66.4V81.1M467.20 65.3V78.8M467.60 65.9V80.7M468.00 71.3V80.4M468.40 71.2V84.2M468.80 66.7V87.2M469.20 70.4V87.8M469.60 72.5V87.1M470.00 70.9V84.6M470.40 75.8V87.9M470.80 77.1V89.4M471.20 75.7V94.2M471.60 79.7V89.6M472.00 79.9V94.8M472.40 81.5V95.5M472.80 82.8V95.2M473.20 79.9V96.6M473.60 85.2V99.5M474.00 80.7V97.0M474.40 84.0V96.3M474.80 86.9V102.4M475.20 87.9V98.4M475.60 91.5V100.9M476.00 90.0V105.6M476.40 92.5V105.4M476.80 90.3V106.5M477.20 96.9V108.2M477.60 98.0V107.1M478.00 97.9V108.0M478.40 98.5V108.2M478.80 98.3V108.2M479.20 99.8V108.2M479.60 97.9V108.2M480.00 94.2V108.2M480.40 94.3V105.6M480.80 89.1V101.8M481.20 88.5V99.0M481.60 81.1V98.5M482.00 77.0V95.5M482.40 73.3V88.7M482.80 70.9V82.8M483.20 67.1V81.0M483.60 65.6V77.8M484.00 60.1V75.7M484.40 58.6V75.9M484.80 58.6V68.9" stroke="#38baea" stroke-opacity="1.0" stroke-width="0.85" fill="none"/>
<polyline points="316.2,83.5 316.7,85.9 317.2,88.3 317.7,90.6 318.2,92.5 318.7,94.5 319.2,96.5 319.7,98.4 320.2,100.2 320.7,101.7 321.2,103.1 321.7,104.6 322.2,105.4 322.7,103.4 323.2,101.8 323.7,100.2 324.2,98.7 324.7,97.1 325.2,95.6 325.7,94.2 326.2,92.8 326.7,91.4 327.2,90.0 327.7,88.5 328.2,86.8 328.7,85.1 329.2,83.4 329.7,81.6 330.2,79.8 330.7,80.6 331.2,81.3 331.7,82.1 332.2,82.9 332.7,83.8 333.2,85.1 333.7,86.3 334.2,87.5 334.7,88.7 335.2,90.1 335.7,91.5 336.2,93.0 336.7,94.4 337.2,95.9 337.7,96.9 338.2,97.4 338.7,97.8 339.2,98.3 339.7,98.7 340.2,99.5 340.7,100.7 341.2,101.9 341.7,103.1 342.2,104.3 342.7,105.6 343.2,103.2 343.7,99.9 344.2,96.7 344.7,93.4 345.2,90.1 345.7,86.7 346.2,83.3 346.7,79.9 347.2,76.5 347.7,73.0 348.2,69.5 348.7,71.8 349.2,74.0 349.7,76.3 350.2,78.4 350.7,80.2 351.2,82.1 351.7,84.0 352.2,85.9 352.7,88.0 353.2,90.4 353.7,92.9 354.2,95.3 354.7,97.8 355.2,100.2 355.7,102.6 356.2,104.9 356.7,103.7 357.2,101.6 357.7,99.3 358.2,96.6 358.7,93.9 359.2,91.2 359.7,88.6 360.2,86.0 360.7,83.7 361.2,81.4 361.7,79.1 362.2,76.8 362.7,74.6 363.2,72.4 363.7,70.2 364.2,68.0 364.7,67.8 365.2,69.1 365.7,70.6 366.2,72.1 366.7,73.6 367.2,75.1 367.7,76.2 368.2,76.9 368.7,77.5 369.2,78.2 369.7,78.9 370.2,79.8 370.7,81.2 371.2,82.6 371.7,84.1 372.2,85.5 372.7,86.9 373.2,88.3 373.7,89.7 374.2,91.1 374.7,92.5 375.2,93.5 375.7,94.1 376.2,93.2 376.7,90.0 377.2,86.9 377.7,84.0 378.2,81.7 378.7,79.3 379.2,77.0 379.7,74.6 380.2,72.1 380.7,69.4 381.2,66.6 381.7,63.9 382.2,61.2 382.7,62.1 383.2,64.2 383.7,66.3 384.2,68.4 384.7,70.5 385.2,72.3 385.7,73.8 386.2,75.2 386.7,76.7 387.2,78.1 387.7,79.7 388.2,81.4 388.7,83.2 389.2,84.9 389.7,85.3 390.2,83.9 390.7,82.6 391.2,81.3 391.7,80.0 392.2,78.7 392.7,77.3 393.2,75.6 393.7,73.9 394.2,72.2 394.7,70.5 395.2,68.7 395.7,66.7 396.2,64.7 396.7,62.6 397.2,60.6 397.7,60.8 398.2,62.8 398.7,64.8 399.2,66.7 399.7,68.7 400.2,70.4 400.7,71.6 401.2,72.8 401.7,74.0 402.2,75.2 402.7,76.7 403.2,78.7 403.7,80.6 404.2,82.5 404.7,84.4 405.2,86.1 405.7,87.6 406.2,89.1 406.7,90.6 407.2,92.1 407.7,93.5 408.2,94.7 408.7,95.8 409.2,97.0 409.7,98.2 410.2,99.5 410.7,99.9 411.2,96.4 411.7,92.9 412.2,89.4 412.7,85.9 413.2,82.4 413.7,78.8 414.2,75.2 414.7,71.7 415.2,68.2 415.7,64.8 416.2,65.9 416.7,68.2 417.2,70.5 417.7,72.7 418.2,74.9 418.7,77.1 419.2,79.3 419.7,81.5 420.2,83.7 420.7,85.9 421.2,88.1 421.7,90.4 422.2,92.6 422.7,95.0 423.2,97.6 423.7,100.3 424.2,102.9 424.7,105.6 425.2,105.1 425.7,102.2 426.2,99.3 426.7,96.4 427.2,93.5 427.7,90.9 428.2,88.9 428.7,86.9 429.2,84.8 429.7,82.8 430.2,80.6 430.7,78.2 431.2,75.8 431.7,73.4 432.2,71.0 432.7,68.6 433.2,70.2 433.7,71.9 434.2,73.6 434.7,75.2 435.2,76.8 435.7,78.2 436.2,79.7 436.7,81.1 437.2,82.5 437.7,84.1 438.2,85.9 438.7,87.7 439.2,89.6 439.7,91.4 440.2,92.9 440.7,94.0 441.2,95.1 441.7,96.2 442.2,97.3 442.7,98.5 443.2,99.9 443.7,101.3 444.2,102.8 444.7,104.2 445.2,103.7 445.7,100.5 446.2,97.2 446.7,94.0 447.2,90.8 447.7,87.3 448.2,83.5 448.7,79.6 449.2,75.8 449.7,73.1 450.2,74.9 450.7,77.2 451.2,79.5 451.7,81.8 452.2,84.1 452.7,86.2 453.2,87.9 453.7,89.7 454.2,91.4 454.7,93.2 455.2,94.9 455.7,96.5 456.2,98.1 456.7,99.7 457.2,101.3 457.7,103.0 458.2,104.9 458.7,106.8 459.2,104.8 459.7,102.7 460.2,100.4 460.7,97.8 461.2,95.2 461.7,92.7 462.2,90.1 462.7,87.7 463.2,85.7 463.7,83.7 464.2,81.7 464.7,79.7 465.2,77.6 465.7,75.4 466.2,73.2 466.7,72.3 467.2,73.6 467.7,74.8 468.2,76.1 468.7,77.4 469.2,78.7 469.7,80.0 470.2,81.3 470.7,82.7 471.2,84.0 471.7,85.4 472.2,86.7 472.7,88.1 473.2,89.5 473.7,90.9 474.2,92.3 474.7,93.7 475.2,95.1 475.7,96.5 476.2,98.0 476.7,99.4 477.2,100.9 477.7,102.1 478.2,103.0 478.7,103.9 479.2,104.7 479.7,103.4 480.2,99.1 480.7,95.2 481.2,91.4 481.7,87.6 482.2,83.7 482.7,79.7 483.2,75.2 483.7,70.7 484.2,66.2 484.7,61.7" fill="none" stroke="#38baea" stroke-width="1.8" stroke-linejoin="round"/>
<rect x="502.7" y="56.00" width="168.7" height="1" fill="#444"/>
<rect x="502.7" y="63.66" width="168.7" height="1" fill="#444"/>
<rect x="502.7" y="71.33" width="168.7" height="1" fill="#444"/>
<rect x="502.7" y="78.99" width="168.7" height="1" fill="#444"/>
<rect x="502.7" y="86.65" width="168.7" height="1" fill="#444"/>
<rect x="502.7" y="94.31" width="168.7" height="1" fill="#444"/>
<rect x="502.7" y="101.97" width="168.7" height="1" fill="#444"/>
<rect x="502.7" y="109.64" width="168.7" height="1" fill="#444"/>
<rect x="502.7" y="117.30" width="168.7" height="1" fill="#444"/>
<rect x="502.2" y="56.5" width="1" height="61.3" fill="#444"/>
<polygon points="502.7,117.8 502.7,56.5 503.6,58.6 504.5,73.6 505.4,76.6 506.3,79.5 507.2,81.2 508.1,76.5 509.0,78.6 509.9,79.3 510.8,79.9 511.7,72.6 512.6,73.8 513.5,72.0 514.4,79.6 515.3,79.9 516.2,74.3 517.1,80.8 518.0,77.4 518.9,72.9 519.8,72.0 520.7,66.6 521.6,64.3 522.5,68.9 523.4,65.6 524.3,68.2 525.2,69.8 526.1,68.3 527.0,71.9 527.9,71.0 528.8,74.0 529.7,70.7 530.6,71.9 531.5,71.1 532.4,73.4 533.3,72.3 534.2,71.3 535.1,78.0 536.0,77.7 536.9,75.6 537.8,73.6 538.7,69.3 539.6,68.1 540.5,68.6 541.4,66.9 542.3,73.5 543.2,70.5 544.1,74.6 545.0,71.0 545.9,77.0 546.8,76.6 547.7,75.3 548.6,90.1 549.5,113.3 550.4,117.8 551.3,117.8 552.2,117.8 553.1,117.8 554.0,117.8 554.9,117.8 555.8,117.8 556.7,117.8 557.6,117.8 558.5,117.8 559.4,117.8 560.3,104.1 561.2,99.3 562.1,85.4 563.0,80.5 563.9,84.6 564.8,84.8 565.7,79.5 566.6,77.9 567.5,80.9 568.4,87.6 569.3,86.6 570.2,81.1 571.1,82.1 572.0,80.6 572.9,79.9 573.8,86.3 574.7,80.6 575.6,84.0 576.5,82.6 577.4,79.8 578.3,84.1 579.2,78.3 580.1,82.8 581.0,78.2 581.9,81.2 582.8,79.7 583.7,80.4 584.6,86.6 585.5,84.6 586.4,79.4 587.3,84.1 588.2,77.9 589.1,80.1 590.0,85.2 590.9,84.3 591.8,79.9 592.7,88.1 593.6,81.6 594.5,82.7 595.4,87.8 596.3,84.0 597.2,83.9 598.1,82.2 599.0,82.7 599.9,87.2 600.8,83.4 601.7,80.4 602.6,76.6 603.5,76.6 604.4,78.6 605.3,71.8 606.2,72.5 607.1,77.6 608.0,74.9 608.9,76.4 609.8,83.5 610.7,83.5 611.6,83.4 612.5,83.6 613.4,88.6 614.3,90.2 615.2,83.2 616.1,89.7 617.0,88.9 617.9,86.1 618.8,83.5 619.7,79.7 620.6,78.4 621.5,86.5 622.4,79.3 623.3,82.5 624.2,77.6 625.1,82.4 626.0,80.7 626.9,78.6 627.8,78.2 628.7,83.5 629.6,77.7 630.5,79.4 631.4,82.7 632.3,85.6 633.2,83.5 634.1,80.3 635.0,85.6 635.9,78.6 636.8,76.4 637.7,78.4 638.6,80.1 639.5,76.9 640.4,78.2 641.3,80.2 642.2,82.1 643.1,78.0 644.0,79.8 644.9,84.2 645.8,84.8 646.7,82.4 647.6,84.4 648.5,85.3 649.4,82.3 650.3,87.4 651.2,96.7 652.1,100.4 653.0,91.3 653.9,90.3 654.8,77.4 655.7,84.4 656.6,86.2 657.5,93.3 658.4,87.4 659.3,89.6 660.2,78.1 661.1,83.6 662.0,90.5 662.9,95.6 663.8,110.4 664.7,117.8 665.6,117.8 666.5,117.8 667.4,117.8 668.3,117.8 669.2,117.8 670.1,117.8 671.0,117.8 671.4,117.8" fill="#505050" fill-opacity="0.7"/>
<polygon points="502.7,117.8 502.7,60.0 503.6,66.1 504.5,78.2 505.4,86.0 506.3,87.5 507.2,89.5 508.1,83.8 509.0,85.2 509.9,87.3 510.8,84.9 511.7,85.1 512.6,80.5 513.5,82.4 514.4,82.4 515.3,85.2 516.2,85.7 517.1,80.8 518.0,78.7 518.9,77.3 519.8,80.0 520.7,77.9 521.6,73.7 522.5,77.0 523.4,74.6 524.3,78.4 525.2,77.1 526.1,76.8 527.0,81.0 527.9,77.0 528.8,76.3 529.7,79.9 530.6,79.4 531.5,76.9 532.4,81.1 533.3,79.8 534.2,81.1 535.1,78.8 536.0,82.3 536.9,80.4 537.8,81.0 538.7,79.8 539.6,76.4 540.5,76.7 541.4,75.9 542.3,76.2 543.2,76.0 544.1,77.3 545.0,79.4 545.9,77.2 546.8,81.2 547.7,85.8 548.6,93.6 549.5,113.1 550.4,117.8 551.3,117.8 552.2,117.8 553.1,117.8 554.0,117.8 554.9,117.8 555.8,117.8 556.7,117.8 557.6,117.8 558.5,117.8 559.4,117.8 560.3,106.1 561.2,95.9 562.1,88.1 563.0,87.3 563.9,83.1 564.8,86.6 565.7,81.0 566.6,84.8 567.5,86.1 568.4,82.9 569.3,87.6 570.2,85.7 571.1,86.6 572.0,83.5 572.9,83.4 573.8,83.9 574.7,87.7 575.6,83.7 576.5,86.3 577.4,86.6 578.3,86.1 579.2,82.7 580.1,82.6 581.0,83.6 581.9,85.2 582.8,82.1 583.7,85.6 584.6,85.8 585.5,85.6 586.4,80.7 587.3,84.8 588.2,80.3 589.1,82.1 590.0,84.4 590.9,87.0 591.8,84.5 592.7,87.7 593.6,86.3 594.5,85.8 595.4,86.3 596.3,85.7 597.2,85.4 598.1,86.1 599.0,89.2 599.9,90.9 600.8,85.8 601.7,83.0 602.6,86.1 603.5,83.1 604.4,79.9 605.3,76.5 606.2,78.1 607.1,81.9 608.0,83.4 608.9,84.9 609.8,83.4 610.7,88.6 611.6,85.1 612.5,88.2 613.4,90.1 614.3,86.2 615.2,89.0 616.1,89.8 617.0,88.0 617.9,88.5 618.8,84.1 619.7,84.7 620.6,82.6 621.5,86.0 622.4,82.5 623.3,82.3 624.2,84.2 625.1,83.2 626.0,84.1 626.9,82.0 627.8,82.9 628.7,84.5 629.6,83.3 630.5,82.6 631.4,83.5 632.3,82.5 633.2,83.7 634.1,86.6 635.0,86.0 635.9,83.8 636.8,82.6 637.7,81.6 638.6,80.3 639.5,81.5 640.4,84.5 641.3,85.2 642.2,82.6 643.1,84.6 644.0,84.3 644.9,83.5 645.8,83.2 646.7,84.2 647.6,83.8 648.5,87.5 649.4,86.2 650.3,93.3 651.2,104.3 652.1,99.5 653.0,90.3 653.9,90.3 654.8,84.3 655.7,85.4 656.6,85.7 657.5,93.4 658.4,89.6 659.3,87.9 660.2,83.6 661.1,86.6 662.0,90.9 662.9,95.3 663.8,109.3 664.7,117.8 665.6,117.8 666.5,117.8 667.4,117.8 668.3,117.8 669.2,117.8 670.1,117.8 671.0,117.8 671.4,117.8" fill="#3fbdec"/>
<rect x="554" y="69" width="1.2" height="48.8" fill="#3fbdec"/>
<rect x="502.7" y="117.2" width="168.7" height="1.1" fill="#3fbdec"/>
<g fill="none" stroke="#5f6368" stroke-width="0.9" stroke-linecap="round" stroke-linejoin="round">
<path d="M133 12H127.2M129.8 9.3L127.1 12L129.8 14.7"/>
<path d="M142 12H147.8M145.2 9.3L147.9 12L145.2 14.7" stroke="#c4c7c9"/>
<path d="M162.2 10.2A3 3 0 1 0 162.6 12.6"/><path d="M162.6 8.8V10.6H160.8" fill="#5f6368" stroke-width="0.6"/>
<circle cx="177.6" cy="12" r="2.8" stroke-width="0.7"/><path d="M177.6 11.6V13.6M177.6 10.3V10.5" stroke-width="0.7"/>
<path d="M608 9.2L608.9 11.1L611 11.3L609.4 12.7L609.9 14.8L608 13.7L606.1 14.8L606.6 12.7L605 11.3L607.1 11.1Z" stroke-width="0.7"/>
</g>
<path d="M626.5 8.8L629.6 9.8V12.2C629.6 13.9 628.3 15 626.5 15.6C624.7 15 623.4 13.9 623.4 12.2V9.8Z" fill="#6b6f73"/><circle cx="626.5" cy="12" r="1.5" fill="#aeb1b4"/>
<path d="M637.6 10.4H639.6V9.9A1.1 1.1 0 0 1 641.8 9.9V10.4H643.6V12.3H644.1A1.1 1.1 0 0 1 644.1 14.5H643.6V15.6H641.6V15.1A1 1 0 0 0 639.6 15.1V15.6H637.6V13.9H638.1A0.9 0.9 0 0 0 638.1 12.1H637.6Z" fill="#4a4e52"/>
<circle cx="655.7" cy="12" r="4.9" fill="#3a3f48"/><circle cx="655.7" cy="11.4" r="2.6" fill="#c9a894"/><path d="M652.4 15.6A3.6 3.6 0 0 1 659 15.6A4.9 4.9 0 0 1 652.4 15.6Z" fill="#2f6fa5"/><path d="M653.2 10.6A2.6 2.2 0 0 1 658.2 10.6A3 3 0 0 0 653.2 10.6Z" fill="#e4ddd6"/>
<circle cx="670.3" cy="9.4" r="0.75" fill="#5f6368"/><circle cx="670.3" cy="12" r="0.75" fill="#5f6368"/><circle cx="670.3" cy="14.6" r="0.75" fill="#5f6368"/>
<path d="M666.6 26.2L671.4 33.8H661.8Z" fill="#fff" stroke="#fff" stroke-width="0.3" stroke-linejoin="round"/><rect x="666.1" y="28.6" width="1" height="2.8" fill="#85237f"/><rect x="666.1" y="32" width="1" height="1" fill="#85237f"/>
<path d="M444 280.6L446.7 283.5L449.4 280.6" fill="none" stroke="#d4d4d4" stroke-width="1.1"/>
<path d="M177.9 326.6L179.5 324L181.1 326.6Z" fill="#ddd"/>
</svg>
<div class="t" id="url" style="left:185.6px;top:8.90px;font-size:6.5px;font-weight:400;color:#26282b;letter-spacing:-0.204px;">127.0.0.1<span style="color:#80868b">:8082/gps</span></div>
<div class="t" id="logo" style="left:125.9px;top:27.05px;font-size:8.8px;font-weight:700;color:#fff;font-family:'DejaVu Sans','Liberation Sans',sans-serif;letter-spacing:1.018px;">THIMEO</div>
<div class="t" id="umpx" style="left:178px;top:26.20px;font-size:8.5px;font-weight:400;color:#f4eaf4;letter-spacing:0.068px;">µMPX</div>
<div class="t" id="n1" style="left:214px;top:26.34px;font-size:7.4px;font-weight:400;color:#efe4ef;letter-spacing:-0.222px;">Stream</div>
<div class="t" id="n2" style="left:243.9px;top:26.34px;font-size:7.4px;font-weight:400;color:#efe4ef;letter-spacing:0.042px;">FM Output</div>
<div class="t" id="n3" style="left:286.6px;top:26.34px;font-size:7.4px;font-weight:400;color:#efe4ef;letter-spacing:-0.188px;">Security</div>
<div class="t" id="n4" style="left:319.3px;top:26.34px;font-size:7.4px;font-weight:400;color:#efe4ef;letter-spacing:-0.970px;">GPS</div>
<div class="t" id="n5" style="left:339.5px;top:26.34px;font-size:7.4px;font-weight:400;color:#efe4ef;letter-spacing:-0.327px;">License</div>
<div class="t" id="ttl" style="left:378.7px;top:133.57px;font-size:10.9px;font-weight:700;color:#fff;letter-spacing:-0.731px;">GPS SFN</div>
<div class="t" id="h1" style="left:129.4px;top:160.09px;font-size:11px;font-weight:400;color:#d4d4d4;letter-spacing:-0.026px;">SFN synchronization</div>
<div class="t" id="h2" style="left:409.7px;top:159.99px;font-size:11px;font-weight:400;color:#d4d4d4;letter-spacing:-0.171px;">NMEA</div>
<div class="t" id="h3" style="left:129.4px;top:275.69px;font-size:11px;font-weight:400;color:#d4d4d4;letter-spacing:-0.105px;">Delay</div>
<div class="t" id="h4" style="left:409.9px;top:275.89px;font-size:11px;font-weight:400;color:#d4d4d4;letter-spacing:-0.198px;">Status</div>
<div class="t" id="l1" style="left:129.4px;top:186.75px;font-size:7.5px;font-weight:700;color:#d0d0d0;letter-spacing:-0.289px;">Enable GPS synchronization</div>
<div class="t" id="l2" style="left:409.7px;top:186.45px;font-size:7.5px;font-weight:700;color:#444444;letter-spacing:-0.258px;">GPS NMEA device</div>
<div class="t" id="com" style="left:415.5px;top:201.27px;font-size:7px;font-weight:400;color:#505050;letter-spacing:-0.009px;">COM8</div>
<div class="t" id="l3" style="left:409.7px;top:222.95px;font-size:7.5px;font-weight:700;color:#444444;">Name</div>
<div class="t" id="l4" style="left:129.4px;top:302.05px;font-size:7.5px;font-weight:700;color:#e4e4e4;letter-spacing:-0.163px;">Delay</div>
<div class="t" id="v4" style="left:153.4px;top:302.98px;font-size:6.4px;font-weight:400;color:#a4a4a4;letter-spacing:-0.236px;">1.000 sec</div>
<div class="t" id="l5" style="left:129.4px;top:338.65px;font-size:7.5px;font-weight:700;color:#444444;letter-spacing:-0.309px;">GPS precise delay</div>
<div class="t" id="v5" style="left:194px;top:339.58px;font-size:6.4px;font-weight:400;color:#989898;letter-spacing:-0.091px;">0.0 µs</div>
<div class="t" id="l6" style="left:129.4px;top:375.25px;font-size:7.5px;font-weight:700;color:#444444;letter-spacing:-0.108px;">Measure I/O loopback delay</div>
<div class="t" id="s1" style="left:409.9px;top:302.85px;font-size:7.5px;font-weight:700;color:#444444;letter-spacing:-0.430px;">GPS lock</div>
<div class="t" id="s2" style="left:409.9px;top:339.55px;font-size:7.5px;font-weight:700;color:#444444;letter-spacing:-0.284px;">Stream GPS data</div>
<div class="t" id="s3" style="left:409.9px;top:376.15px;font-size:7.5px;font-weight:700;color:#444444;letter-spacing:-0.257px;">GPS NMEA data</div>
<div class="t" id="s4" style="left:409.9px;top:412.65px;font-size:7.5px;font-weight:700;color:#444444;letter-spacing:-0.477px;">GPS 1 PPS pulses</div>
<div class="t" id="s5" style="left:409.9px;top:449.55px;font-size:7.5px;font-weight:700;color:#444444;letter-spacing:-0.121px;">I/O loopback delay</div>
<div class="t" id="sv2" style="left:432.7px;top:354.47px;font-size:7px;font-weight:400;color:#d2d2d2;letter-spacing:-0.052px;">0:00:00</div>
<div class="t" id="sv3" style="left:432.7px;top:390.97px;font-size:7px;font-weight:400;color:#d2d2d2;letter-spacing:-0.052px;">0:00:00</div>
<div class="t" id="sv5" style="left:432.8px;top:464.07px;font-size:7px;font-weight:400;color:#d2d2d2;letter-spacing:0.216px;">No info</div>
</body></html>
